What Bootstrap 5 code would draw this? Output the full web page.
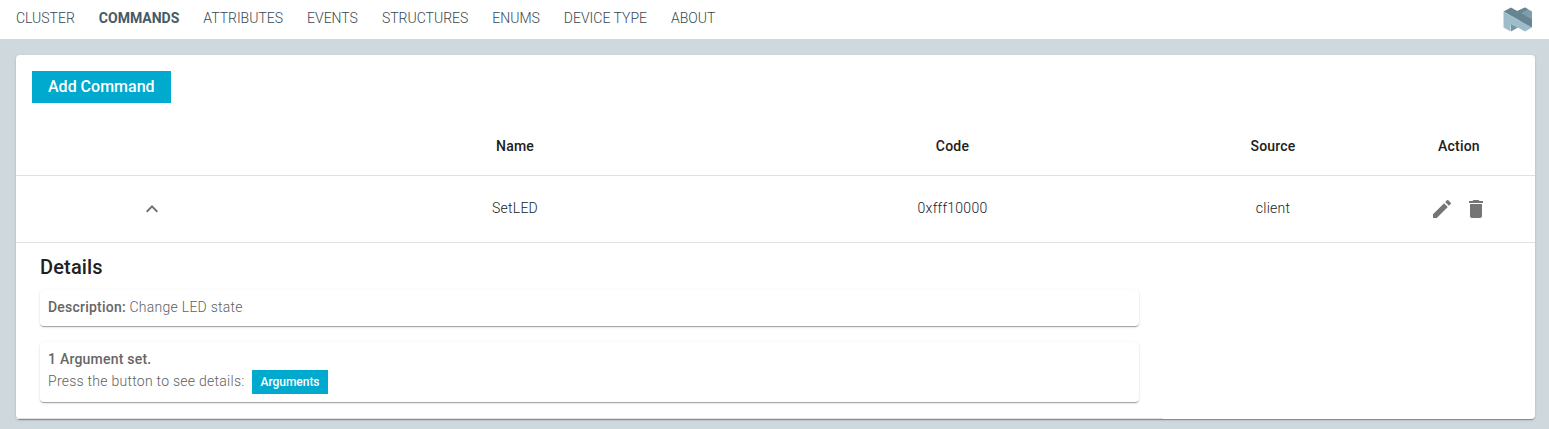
<!DOCTYPE html>
<html lang="en">
<head>
<meta charset="utf-8">
<meta name="viewport" content="width=device-width, initial-scale=1">
<title>Commands</title>
<link href="https://cdn.jsdelivr.net/npm/bootstrap@5.3.0/dist/css/bootstrap.min.css" rel="stylesheet">
<style>
body{background:#cfd8dc;font-family:Roboto,sans-serif;font-size:14px;line-height:20px;color:#212121;overflow:hidden;min-height:429px}
.topbar{height:39px;gap:24px;padding:0 16px}
.topbar .nav-link{padding:0 0 3px;color:#37474f;font-weight:300;line-height:20px;white-space:nowrap}
.topbar .nav-link.active{font-weight:700;color:#455a64}
.logo{width:30px;height:25px;margin-bottom:1px}
.paper{background:#fff;border-radius:4px;box-shadow:0 2px 1px -1px rgba(0,0,0,.2),0 1px 1px 0 rgba(0,0,0,.14),0 1px 3px 0 rgba(0,0,0,.12)}
.main-paper{margin:16px 14px 0 16px;height:364px}
.btn-accent,.btn-accent:hover{background:#00a9ce;color:#fff;border:0;border-radius:0;font-weight:500}
.btn-add{font-size:16px;line-height:24px;height:32px;padding:4px 16px}
.btn-args{font-size:12px;line-height:16px;height:24px;padding:4px 8px;margin-left:8px;letter-spacing:-.03px}
.grid-table{table-layout:fixed;width:100%;border-collapse:separate;border-spacing:0;margin-top:16px;text-align:center}
.grid-table th,.grid-table td{border-bottom:1px solid #e0e0e0;padding:0;vertical-align:middle}
.grid-table th{height:57px;font-weight:500;letter-spacing:.2px;padding-bottom:3px}
.grid-table td{font-weight:300;letter-spacing:.25px}
.data-row td{height:67px;padding-bottom:2px}
.data-row td.icon-cell{padding-bottom:0}
.grid-table .details{height:176px;padding:12px 24px 0;text-align:left;vertical-align:top}
.grid-table .blank{border:0}
.details h6{font-size:20px;line-height:24px;font-weight:500;letter-spacing:.15px;margin:0 0 11px}
.note{padding:7px 8px 9px;color:#616161;letter-spacing:.26px}
.note strong{font-weight:500;color:#666;letter-spacing:.22px}
.press-line{height:24px;padding-top:1px}
.press-line span{padding-top:1px}
</style>
</head>
<body>
<nav class="topbar d-flex align-items-center bg-white">
  <a class="nav-link" href="#">CLUSTER</a>
  <a class="nav-link active" href="#">COMMANDS</a>
  <a class="nav-link" href="#">ATTRIBUTES</a>
  <a class="nav-link" href="#">EVENTS</a>
  <a class="nav-link" href="#">STRUCTURES</a>
  <a class="nav-link" href="#">ENUMS</a>
  <a class="nav-link" href="#">DEVICE TYPE</a>
  <a class="nav-link" href="#">ABOUT</a>
  <svg class="logo ms-auto" viewBox="0 0 30 25" aria-label="Logo">
    <path fill="#7e9dab" d="M14 4.500 22 .5l7 4v15l-8 4z"/>
    <path fill="#668491" d="M.5 4.500 8 .5 29 12.500v8z"/>
    <path fill="#688693" d="m14 4 8-3.500 3 1.700-7 4z"/>
    <path fill="#7596a4" d="M7.500 16.500 15 20.500l-7 4z"/>
    <path fill="#9dbdcb" d="M.5 4.500 29 20.500l-7 4-14.500-8v8l-7-4z"/>
  </svg>
</nav>
<main class="paper main-paper">
  <div class="px-3 pt-3 d-flex"><button class="btn btn-accent btn-add" type="button">Add Command</button></div>
  <table class="grid-table">
    <colgroup><col style="width:272px"><col style="width:454px"><col style="width:421px"><col style="width:220px"><col></colgroup>
    <thead><tr><th></th><th>Name</th><th>Code</th><th>Source</th><th>Action</th></tr></thead>
    <tbody>
      <tr class="data-row">
        <td class="icon-cell"><svg class="d-block mx-auto" width="24" height="24" viewBox="0 0 24 24" fill="#707070"><path d="M7.410 15.410 12 10.830l4.590 4.580L18 14l-6-6-6 6z"/></svg></td>
        <td>SetLED</td><td>0xfff10000</td><td>client</td>
        <td class="icon-cell"><div class="d-flex justify-content-center" style="gap:10px">
          <svg width="24" height="24" viewBox="0 0 24 24" fill="#757575"><path d="M3 17.250V21h3.750L17.810 9.940l-3.750-3.750L3 17.250zM20.710 7.040a1 1 0 0 0 0-1.410l-2.340-2.340a1 1 0 0 0-1.410 0l-1.830 1.830 3.750 3.750 1.830-1.830z"/></svg>
          <svg width="24" height="24" viewBox="0 0 24 24" fill="#757575"><path d="M6 19c0 1.100.9 2 2 2h8c1.100 0 2-.9 2-2V7H6v12zM19 4h-3.500l-1-1h-5l-1 1H5v2h14V4z"/></svg>
        </div></td>
      </tr>
      <tr>
        <td class="details" colspan="3">
          <h6>Details</h6>
          <div class="paper note"><strong>Description:</strong> Change LED state</div>
          <div class="paper note mt-3"><strong>1 Argument set.</strong>
            <div class="press-line d-flex align-items-start"><span>Press the button to see details:</span><button class="btn btn-accent btn-args" type="button">Arguments</button></div>
          </div>
        </td>
        <td class="blank" colspan="2"></td>
      </tr>
    </tbody>
  </table>
</main>
<script src="https://cdn.jsdelivr.net/npm/bootstrap@5.3.0/dist/js/bootstrap.bundle.min.js"></script>
</body>
</html>
